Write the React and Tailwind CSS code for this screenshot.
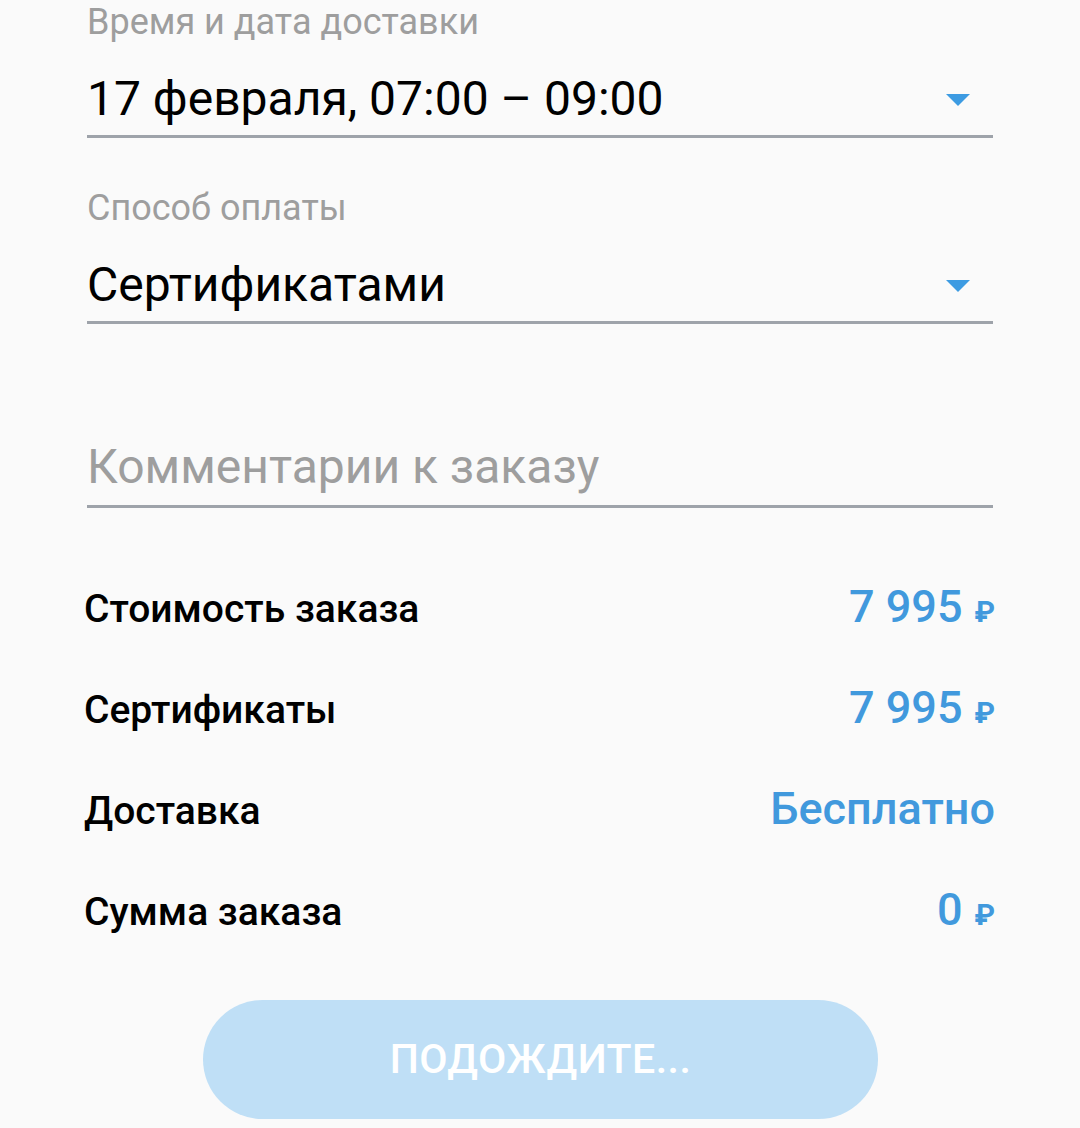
import React from "react";

/* ── Dropdown field with label + underline ── */
function SelectField({ label, value, mtLabel }) {
  return (
    <div className={mtLabel}>
      <div className="pt-[2px] text-[36px] leading-[40px] text-[#9e9e9e]">{label}</div>
      <div className="mt-[29px] flex items-center justify-between border-b-[3px] border-[#9ea3aa] pb-[8px]">
        <span className="text-[48px] leading-[56px] text-black">{value}</span>
        <svg width="24" height="12" viewBox="0 0 24 12" className="mr-[23px] mt-[2px]">
          <path d="M0 0 L24 0 L12 12 Z" fill="#3d9be2" />
        </svg>
      </div>
    </div>
  );
}

function Rub() {
  return <span className="ml-[12px] text-[29px] font-bold">₽</span>;
}

function SummaryRow({ label, children }) {
  return (
    <div className="flex h-[101px] items-baseline justify-between">
      <span className="-ml-[3px] text-[39px] font-medium leading-[52px] text-black">{label}</span>
      <span className="-mr-[2px] text-[45px] font-medium leading-[52px] text-[#4199dd]">{children}</span>
    </div>
  );
}

export default function App() {
  return (
    <div
      className="h-[1128px] w-[1080px] overflow-hidden bg-[#fafafa]"
      style={{ fontFamily: "Roboto, 'Noto Sans', sans-serif" }}
    >
      <div className="px-[87px]">
        <SelectField label="Время и дата доставки" value="17 февраля, 07:00 – 09:00" />
        <SelectField label="Способ оплаты" value="Сертификатами" mtLabel="mt-[48px]" />

        {/* comment input */}
        <div className="mt-[115px] border-b-[3px] border-[#9ea3aa] pb-[10px]">
          <span className="text-[48px] leading-[56px] text-[#9e9e9e]">Комментарии к заказу</span>
        </div>

        {/* summary */}
        <div className="mt-[73px]">
          <SummaryRow label="Стоимость заказа">
            7 995<Rub />
          </SummaryRow>
          <SummaryRow label="Сертификаты">
            7 995<Rub />
          </SummaryRow>
          <SummaryRow label="Доставка">Бесплатно</SummaryRow>
          <SummaryRow label="Сумма заказа">
            0<Rub />
          </SummaryRow>
        </div>
      </div>

      <div className="mt-[15px] flex justify-center">
        <button className="ml-[1px] flex h-[119px] w-[675px] items-center justify-center rounded-full bg-[#bfdff6] text-[41px] font-medium tracking-[0.5px] text-white">
          ПОДОЖДИТЕ...
        </button>
      </div>
    </div>
  );
}
